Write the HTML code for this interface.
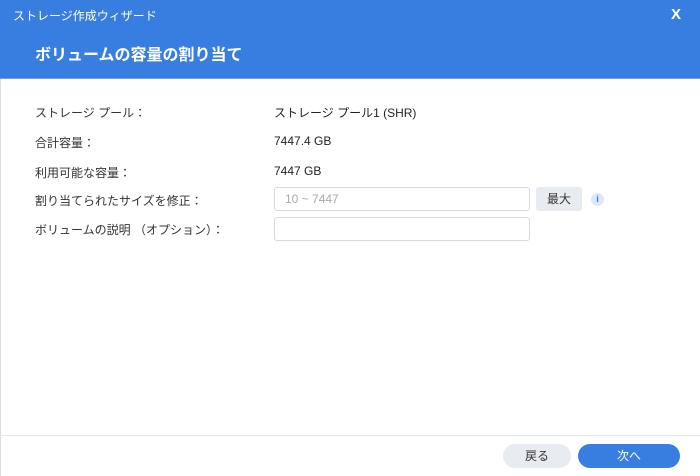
<!DOCTYPE html>
<html><head><meta charset="utf-8"><style>
*{margin:0;padding:0;box-sizing:border-box}
body{width:700px;height:476px;overflow:hidden;background:#fff;font-family:"Liberation Sans","Noto Sans CJK JP",sans-serif;position:relative;color:#333}
.hdr{position:absolute;left:0;top:0;width:700px;height:79px;background:#387ee1;border-bottom:1px solid #6aa0ee}
.t1{position:absolute;left:13px;top:7px;font-size:12px;color:#fff}
.x{position:absolute;left:671px;top:6px;font-size:15px;font-weight:bold;color:#fff}
.t2{position:absolute;left:35px;top:41px;font-size:16px;font-weight:bold;color:#fff}
.lbl{position:absolute;left:35px;font-size:12px;color:#333}
.val{position:absolute;left:274px;font-size:12px;color:#222}
.inp{position:absolute;left:274px;width:256px;height:24px;border:1px solid #d5dbe3;border-radius:3px;font-size:12px;color:#aaa;padding:4px 10px}
.max{position:absolute;left:536px;top:187px;width:46px;height:24px;background:#e8ecf1;border-radius:3px;font-size:12px;text-align:center;line-height:24px;color:#333}
.info{position:absolute;left:591px;top:193px;width:13px;height:13px;border-radius:50%;background:#dce8fa;color:#387ee1;font-size:9px;font-weight:bold;text-align:center;line-height:13px}
.foot{position:absolute;left:0;top:435px;width:700px;border-top:1px solid #e3e7ec}
.b{position:absolute;top:444px;height:24px;border-radius:12px;font-size:12px;text-align:center;line-height:24px}
.edge{position:absolute;left:0;top:79px;width:1px;height:397px;background:#ddd}
</style></head><body>
<div class="hdr"><div class="t1">ストレージ作成ウィザード</div><div class="x">X</div><div class="t2">ボリュームの容量の割り当て</div></div>
<div class="edge"></div>
<div class="lbl" style="top:104px">ストレージ プール：</div><div class="val" style="top:104px">ストレージ プール1 (SHR)</div>
<div class="lbl" style="top:134px">合計容量：</div><div class="val" style="top:134px">7447.4 GB</div>
<div class="lbl" style="top:164px">利用可能な容量：</div><div class="val" style="top:164px">7447 GB</div>
<div class="lbl" style="top:192px">割り当てられたサイズを修正：</div>
<div class="inp" style="top:187px">10 ~ 7447</div>
<div class="max">最大</div><div class="info">i</div>
<div class="lbl" style="top:221px">ボリュームの説明 （オプション）：</div>
<div class="inp" style="top:217px"></div>
<div class="foot"></div>
<div class="b" style="left:503px;width:68px;background:#e8ecf1;color:#333">戻る</div>
<div class="b" style="left:578px;width:102px;background:#387ee1;color:#fff">次へ</div>
</body></html>
